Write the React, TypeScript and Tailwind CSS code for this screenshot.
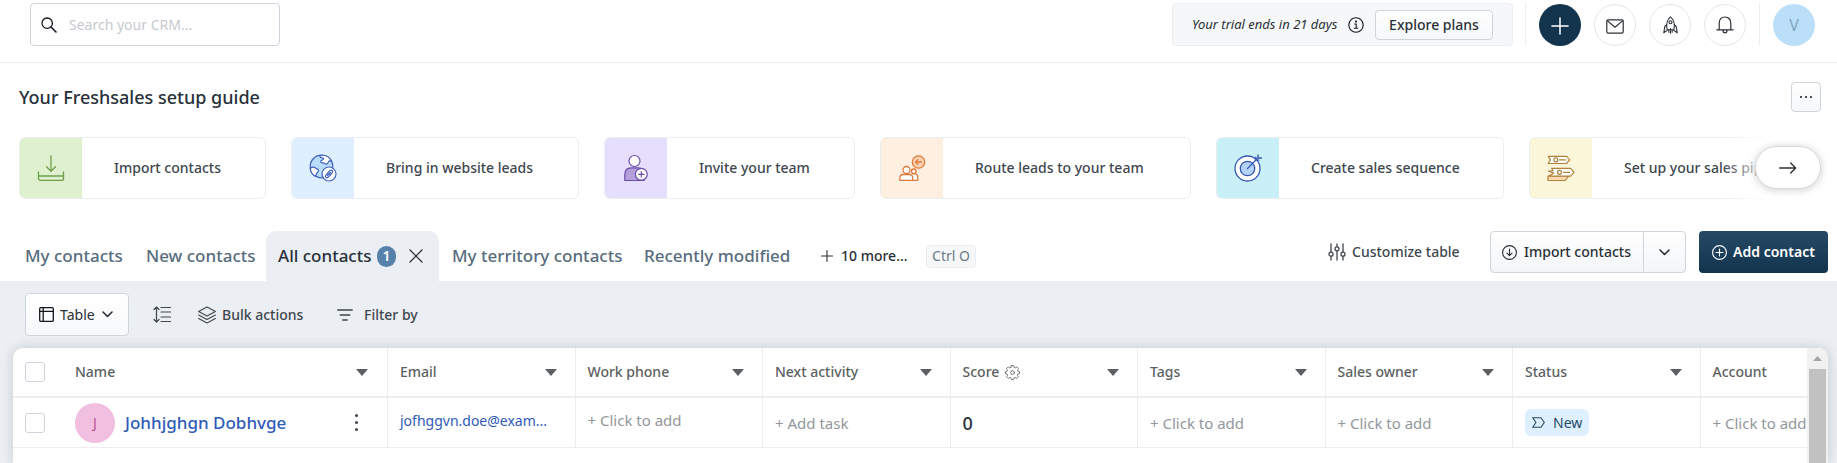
import React from "react";

type IconProps = { className?: string };

const stroke = {
  fill: "none",
  stroke: "currentColor",
  strokeLinecap: "round" as const,
  strokeLinejoin: "round" as const,
};

function SearchIcon() {
  return (
    <svg className="size-4 shrink-0 text-[#12161a]" viewBox="0 0 16 16" {...stroke} strokeWidth="1.3">
      <circle cx="6.2" cy="6.2" r="5.2" />
      <path d="M10 10l5 5" strokeWidth="1.6" />
    </svg>
  );
}

function InfoIcon() {
  return (
    <svg className="size-4 shrink-0 text-[#12161a]" viewBox="0 0 16 16" {...stroke} strokeWidth="1.1">
      <circle cx="8" cy="8" r="7.2" />
      <path d="M6.6 7h1.6v4.2M6.4 11.3h3.4" />
      <circle cx="8" cy="4.6" r="0.5" fill="currentColor" />
    </svg>
  );
}

function MailIcon() {
  return (
    <svg className="mt-1 h-[15px] w-[18px]" viewBox="0 0 18 15" {...stroke} strokeWidth="1.2">
      <rect x="0.8" y="0.8" width="16.4" height="13.400" rx="1.4" />
      <path d="M1.2 1.600l7.8 6.600 7.8-6.600" />
    </svg>
  );
}

function RocketIcon() {
  return (
    <svg className="h-[18px] w-[15px]" viewBox="0 0 15 18" {...stroke} strokeWidth="1.1">
      <path d="M4.200 13.800C3 8.800 3.800 4 7.500.8c3.700 3.200 4.500 8 3.300 13z" />
      <circle cx="7.500" cy="6.200" r="1.500" />
      <path d="M3.700 8.600L1.800 10.500.8 16.800l3.400-2.400M11.300 8.600l1.900 1.900 1 6.300-3.400-2.400M7.500 12.500v4.700M5.800 14.200v2M9.200 14.200v2" />
    </svg>
  );
}

function BellIcon() {
  return (
    <svg className="h-[18px] w-[18px]" viewBox="0 0 18 18" {...stroke} strokeWidth="1.2">
      <path d="M.8 13.800h16.400M3.200 13.600V7.400C3.200 3.600 5.400 1 9 1s5.800 2.600 5.800 6.400v6.200" />
      <path d="M7 14.200c0 1.500.8 2.600 2 2.600s2-1.100 2-2.600" />
    </svg>
  );
}

function DownloadTray() {
  return (
    <svg className="size-7 text-[#6f9e4c]" viewBox="0 0 28 28" {...stroke} strokeWidth="1.300">
      <path d="M14 2v15M9.500 12.800l4.500 4.400 4.500-4.400" />
      <path d="M1.500 18v6.200a2.200 2.200 0 002.200 2.200h20.600a2.200 2.200 0 002.200-2.200V18M1.500 22h25" />
    </svg>
  );
}

function GlobeLink() {
  return (
    <svg className="size-7 text-[#3f60c0]" viewBox="0 0 28 28" {...stroke} strokeWidth="1.200">
      <circle cx="12.500" cy="12.500" r="11.300" fill="#b9dcfb" />
      <path d="M12 1.300c-1.800 1.300-1 2.500 1 2.600 2.500.2 1.500 1.900 0 2.300-2 .6-1.700 2.500.6 2.600 2.200.1 2.400 1.500 3.900 1.300 1.800-.3 1.500-2.200 2.500-3 1-.6 2 0 2.500 0C20.800 3.500 17 1 12 1.300z" fill="#fff" />
      <path d="M1.300 14.500c1.700-1.500 3.400-1.700 5.200-.5 1.800 1.300 3.600 1 2.900 3.200-.5 1.500-2 1.200-2 2.800 0 1.200-1 1.800-1.800 2C3 20 1.500 17.500 1.300 14.500z" fill="#fff" />
      <circle cx="20" cy="20" r="7" fill="#fff" />
      <path d="M18.200 19.400l2.700-2.700c1.700-1.400 3.600.5 2.200 2.200l-2.400 2.400M21.800 20.600l-2.700 2.700c-1.700 1.400-3.600-.5-2.200-2.200l2.400-2.400M18.500 21.500l3-3" />
    </svg>
  );
}

function PersonPlus() {
  return (
    <svg className="h-7 w-6 text-[#6a4cab]" viewBox="0 0 24 28" {...stroke} strokeWidth="1.200">
      <circle cx="10.500" cy="7" r="5.500" fill="#fff" />
      <path d="M.8 26.500V20.500c0-4.500 2.500-6.700 6.500-6.700H14c3.500 0 6 2.200 6 6v6.700z" fill="#b6a0dc" />
      <circle cx="17.300" cy="20.300" r="5.900" fill="#fff" />
      <path d="M17.300 17.500v5.600M14.500 20.300h5.600" />
    </svg>
  );
}

function RouteLeads() {
  return (
    <svg className="size-7 text-[#e07a3c]" viewBox="0 0 28 28" {...stroke} strokeWidth="1.300">
      <circle cx="20.500" cy="8" r="6.200" fill="#fbd3b0" />
      <path d="M23.500 8h-6M19.900 5.600L17.500 8l2.400 2.400" />
      <path d="M15 26.300h4.800v-2.500c0-2.500-1.200-4-3.300-4h-1.500" fill="#fff" />
      <circle cx="15.800" cy="17.300" r="2.300" fill="#fff" />
      <circle cx="8.500" cy="16" r="3.500" fill="#fff" />
      <path d="M1.800 26.300v-2.200c0-2.400 1.500-3.600 3.700-3.600h5.600c2.200 0 3.700 1.200 3.700 3.600v2.200z" fill="#fff" />
    </svg>
  );
}

function TargetIcon() {
  return (
    <svg className="size-7 text-[#3757b5]" viewBox="0 0 28 28" {...stroke} strokeWidth="1.300">
      <circle cx="13.500" cy="14.500" r="12.500" fill="#fff" />
      <circle cx="13.500" cy="14.500" r="7.200" fill="#b5d3f8" />
      <path d="M13.500 14.500L24.500 3.500M24 .8v3.200h3.500M21.800 3.200v3h3" />
    </svg>
  );
}

function Signposts() {
  return (
    <svg className="size-7 text-[#b08240]" viewBox="0 0 28 28" {...stroke} strokeWidth="1.200">
      <path d="M1.200 2.300h18.300l3.200 3.600-3.200 3.600H1.200l2.300-3.600z" fill="#fff" />
      <circle cx="8.800" cy="5.900" r="2" />
      <path d="M12.500 5.900h6" />
      <path d="M1 22h20.800l-3.600 4.500H1z" fill="#fbdcb2" />
      <path d="M4.600 14.300h19l3.400 4-3.400 3.800H1.800l5-2.800L1.500 17h4.600z" fill="#fff" />
      <circle cx="12.500" cy="18.300" r="2" />
      <path d="M16.500 18.300h6" />
    </svg>
  );
}

function Caret() {
  return (
    <svg className="h-[7px] w-3 shrink-0 text-[#5c5f62]" viewBox="0 0 12 7" aria-hidden="true">
      <path d="M0 0h12L6 7z" fill="currentColor" />
    </svg>
  );
}

function Chevron({ className = "" }: IconProps) {
  return (
    <svg className={`h-[7px] w-[11px] shrink-0 ${className}`} viewBox="0 0 11 7" {...stroke} strokeWidth="1.600">
      <path d="M1 1l4.500 4.500L10 1" />
    </svg>
  );
}

function GearIcon() {
  return (
    <svg className="size-[15px]" viewBox="0 0 16 16" {...stroke} strokeWidth="0.9">
      <circle cx="8" cy="8" r="2" />
      <path d="M6.700.7h2.600l.4 1.900 1.200.5 1.700-1.100 1.800 1.800-1.100 1.700.5 1.200 1.600.3v2.300l-1.700.4-.5 1.200 1.100 1.700-1.800 1.800-1.700-1.100-1.200.5-.4 1.600H6.700l-.4-1.700-1.200-.5-1.700 1.100-1.800-1.800 1.100-1.700-.5-1.200L.5 9.300V7l1.700-.3.5-1.200-1.100-1.700 1.800-1.800 1.700 1.100 1.200-.5z" />
    </svg>
  );
}

const cards = [
  { label: "Import contacts", width: "w-[247px]", tint: "bg-[#dff0cf]", icon: <DownloadTray /> },
  { label: "Bring in website leads", width: "w-[288px]", tint: "bg-[#def0ff]", icon: <GlobeLink /> },
  { label: "Invite your team", width: "w-[251px]", tint: "bg-[#e5dffd]", icon: <PersonPlus /> },
  { label: "Route leads to your team", width: "w-[311px]", tint: "bg-[#feefe0]", icon: <RouteLeads /> },
  { label: "Create sales sequence", width: "w-[288px]", tint: "bg-[#caf0f7]", icon: <TargetIcon /> },
  { label: "Set up your sales pipeline", width: "w-[311px]", tint: "bg-[#fbf6da]", icon: <Signposts /> },
];

function TopBar() {
  const circle = "flex size-[42px] items-center justify-center rounded-full border border-[#e3e6ea] bg-white text-[#2b3036]";
  return (
    <header className="flex h-[63px] items-start justify-between border-b border-[#ebedf0] pt-[3px] pr-[22px] pl-[30px]">
      <label className="flex h-[43px] w-[250px] items-center gap-3 rounded border border-[#cfd5dc] pr-2 pl-[10px]">
        <SearchIcon />
        <input
          type="search"
          aria-label="Search your CRM"
          placeholder="Search your CRM..."
          className="min-w-0 flex-1 text-sm outline-none placeholder:text-[#c6cad0]"
        />
      </label>
      <div className="flex items-center">
        <div className="flex h-[43px] w-[341px] items-center rounded border border-[#ebeef1] bg-[#f5f7f9] pl-[19px]">
          <span className="w-[156px] text-[13px] whitespace-nowrap text-[#2b3036] italic">Your trial ends in 21 days</span>
          <InfoIcon />
          <button className="ml-[11px] h-[30px] w-[118px] rounded border border-[#cfd5dc] bg-linear-to-b from-white to-[#f5f7f9] text-sm font-medium text-[#2b3036]">
            Explore plans
          </button>
        </div>
        <div className="mr-[13px] ml-3 h-[42px] w-px bg-[#ebedf0]" />
        <div className="flex gap-[13px]">
          <button aria-label="Quick add" className="flex size-[42px] items-center justify-center rounded-full bg-[#12344d] text-white">
            <svg className="mt-[2px] size-[18px]" viewBox="0 0 18 18" {...stroke} strokeWidth="1.500">
              <path d="M9 .9v16.200M.9 9h16.200" />
            </svg>
          </button>
          <button aria-label="Email" className={circle}><MailIcon /></button>
          <button aria-label="What's new" className={circle}><RocketIcon /></button>
          <button aria-label="Notifications" className={circle}><BellIcon /></button>
        </div>
        <div className="mx-[13px] h-[42px] w-px bg-[#ebedf0]" />
        <button aria-label="Profile" className="size-[42px] rounded-full bg-[#bbdff8] text-base text-[#7fa6c4]">V</button>
      </div>
    </header>
  );
}

function SetupGuide() {
  return (
    <section className="pt-[19px]">
      <div className="flex items-center justify-between pr-4 pl-[19px]">
        <h1 className="text-lg font-medium text-[#283039]">Your Freshsales setup guide</h1>
        <button aria-label="More options" className="flex h-[30px] w-[30px] items-center justify-center gap-[3px] rounded border border-[#cfd5dc] bg-linear-to-b from-white to-[#f5f7f9]">
          <span className="size-[2px] rounded-full bg-[#12161a]" />
          <span className="size-[2px] rounded-full bg-[#12161a]" />
          <span className="size-[2px] rounded-full bg-[#12161a]" />
        </button>
      </div>
      <div className="relative mt-[25px] mr-4 ml-[19px]">
        <div className="flex gap-[25px] overflow-hidden">
          {cards.map((card) => (
            <a
              key={card.label}
              href="#setup"
              className={`flex h-[62px] shrink-0 overflow-hidden rounded-md border border-[#ebedf0] ${card.width}`}
            >
              <span className={`flex w-[62px] shrink-0 items-center justify-center ${card.tint}`}>{card.icon}</span>
              <span className="flex items-center pl-8 text-sm font-medium whitespace-nowrap text-[#40474f]">{card.label}</span>
            </a>
          ))}
        </div>
        <div className="pointer-events-none absolute inset-y-0 right-0 w-[100px] bg-linear-to-r from-transparent to-white to-50%" />
        <button
          aria-label="Next"
          className="absolute top-[9px] right-0 flex h-[43px] w-[66px] items-center justify-center rounded-full border border-[#d5dae0] bg-white text-[#2b3036] shadow-[0_1px_8px_rgba(0,0,0,0.2)]"
        >
          <svg className="h-3 w-[18px]" viewBox="0 0 18 12" {...stroke} strokeWidth="1.300">
            <path d="M.7 6h16M11.700 1l5 5-5 5" />
          </svg>
        </button>
      </div>
    </section>
  );
}

function Tabs() {
  const tab = "whitespace-nowrap text-[17px] font-medium text-[#576c7d]";
  return (
    <nav className="flex h-[50px] items-start pr-[9px] pl-[25px]" aria-label="Views">
      <div className="flex h-[50px] items-center">
        <a href="#my" className={`w-[121px] ${tab}`}>My contacts</a>
        <a href="#new" className={`w-[120px] ${tab}`}>New contacts</a>
        <div className="flex h-[50px] w-[173px] items-center rounded-t-[10px] bg-[#ebeef2] pl-3">
          <a href="#all" className="w-[99px] text-[17px] font-medium whitespace-nowrap text-[#283039]">All contacts</a>
          <span className="flex h-[21px] w-[19px] items-center justify-center rounded-full bg-[#5581ab] text-sm font-semibold text-white">1</span>
          <button aria-label="Close tab" className="ml-[13px]">
            <svg className="size-[14px] text-[#2b3036]" viewBox="0 0 14 14" {...stroke} strokeWidth="1.200">
              <path d="M1 1l12 12M13 1L1 13" />
            </svg>
          </button>
        </div>
        <a href="#territory" className={`ml-[13px] w-48 ${tab}`}>My territory contacts</a>
        <a href="#recent" className={`w-[177px] ${tab}`}>Recently modified</a>
        <button className="flex items-center gap-2 text-sm font-medium text-[#2b3036]">
          <svg className="size-3" viewBox="0 0 12 12" {...stroke} strokeWidth="1.100">
            <path d="M6 .5v11M.5 6h11" />
          </svg>
          <span className="w-[85px] text-left">10 more...</span>
        </button>
        <kbd className="flex h-[23px] w-[50px] items-center justify-center rounded border border-[#ebeef1] bg-[#f5f7f9] font-[inherit] text-sm text-[#6f7c87]">
          Ctrl O
        </kbd>
      </div>
      <div className="ml-auto flex items-center">
        <button className="flex w-[162px] items-center gap-[6px] text-sm font-medium whitespace-nowrap text-[#40474f]">
          <svg className="size-[18px]" viewBox="0 0 18 18" {...stroke} strokeWidth="1.300">
            <path d="M3 1v8M3 13.500V17M9 1v2.500M9 8v9M15 1v8M15 13.500V17" />
            <circle cx="3" cy="11.200" r="2" />
            <circle cx="9" cy="5.800" r="2" />
            <circle cx="15" cy="11.200" r="2" />
          </svg>
          Customize table
        </button>
        <div className="flex h-[42px] w-[196px] rounded border border-[#cfd5dc] bg-linear-to-b from-white to-[#f3f5f8] text-[#2b3036]">
          <button className="flex w-[153px] items-center gap-[7px] border-r border-[#cfd5dc] pl-[11px] text-sm font-medium whitespace-nowrap">
            <svg className="size-[15px]" viewBox="0 0 15 15" {...stroke} strokeWidth="1.100">
              <circle cx="7.500" cy="7.500" r="6.900" />
              <path d="M7.500 4v6.500M5 8.200l2.500 2.500L10 8.200" />
            </svg>
            Import contacts
          </button>
          <button aria-label="More import options" className="flex flex-1 items-center justify-center">
            <Chevron />
          </button>
        </div>
        <button className="ml-[13px] flex h-[42px] w-[129px] items-center justify-center gap-[6px] rounded bg-linear-to-b from-[#264966] to-[#12344d] text-sm font-semibold whitespace-nowrap text-white">
          <svg className="size-[15px]" viewBox="0 0 15 15" {...stroke} strokeWidth="1.100">
            <circle cx="7.500" cy="7.500" r="6.900" />
            <path d="M7.500 4v7M4 7.500h7" />
          </svg>
          Add contact
        </button>
      </div>
    </nav>
  );
}

function Toolbar() {
  return (
    <div className="flex h-[67px] items-center pl-[25px] text-sm font-medium text-[#40474f]">
      <button className="flex h-[43px] w-[104px] items-center rounded border border-[#cfd5dc] bg-linear-to-b from-white to-[#f7f8fa] pl-[13px] font-normal text-[#2b3036]">
        <svg className="size-[15px] shrink-0 text-[#12161a]" viewBox="0 0 15 15" {...stroke} strokeWidth="1.300">
          <rect x=".7" y=".7" width="13.600" height="13.600" rx="1" />
          <path d="M4.200.7v13.600M.7 4.400h13.600" />
        </svg>
        <span className="w-12 pl-[6px] text-left">Table</span>
        <Chevron />
      </button>
      <button aria-label="Row height" className="ml-6">
        <svg className="h-[17px] w-[18px]" viewBox="0 0 18 17" {...stroke} strokeWidth="1.200">
          <path d="M3.500 1v15M1 3.500L3.500 1 6 3.500M1 13.500L3.500 16 6 13.500M8 1.500h9.500M8 6h9.500M8 11h9.500M8 15.500h9.500" />
        </svg>
      </button>
      <button className="ml-[27px] flex w-[139px] items-center gap-[6px] whitespace-nowrap">
        <svg className="size-[18px]" viewBox="0 0 18 18" {...stroke} strokeWidth="1.100">
          <path d="M9 1l8.400 4.500L9 10 .6 5.500zM.6 9L9 13.500 17.400 9M.6 12.500L9 17l8.400-4.500" />
        </svg>
        Bulk actions
      </button>
      <button className="flex items-center gap-[11px] whitespace-nowrap">
        <svg className="h-3 w-4" viewBox="0 0 16 12" {...stroke} strokeWidth="1.300">
          <path d="M.7 1h14.600M3.200 6h9.600M5.700 11h4.600" />
        </svg>
        Filter by
      </button>
    </div>
  );
}

const columns = ["Email", "Work phone", "Next activity", "Score", "Tags", "Sales owner", "Status", "Account"];

function Check({ label }: { label: string }) {
  return (
    <input
      type="checkbox"
      aria-label={label}
      className="mr-[30px] size-5 shrink-0 appearance-none rounded-[3px] border border-[#cfd5dc] bg-white"
    />
  );
}

function AddLink({ text }: { text: string }) {
  return <button className="text-[15px] whitespace-nowrap text-[#92979c]">{text}</button>;
}

function ContactsTable() {
  const cell = "border-r border-b border-[#ebedf0] px-3 align-middle";
  return (
    <div className="mr-[9px] ml-[13px] flex min-h-[115px] overflow-hidden rounded-t-[10px] bg-white shadow-[0_0_12px_rgba(24,50,71,0.18)]">
      <div className="min-w-0 flex-1 overflow-hidden">
        <table className="w-[1875px] table-fixed border-separate border-spacing-0 text-left">
          <colgroup>
            <col className="w-[375px]" />
            {columns.map((name) => (
              <col key={name} />
            ))}
          </colgroup>
          <thead>
            <tr className="h-[50px] text-sm text-[#5c5f62]">
              <th className="border-r border-b-2 border-[#ebedf0] pr-[19px] pl-3 font-medium">
                <div className="flex items-center">
                  <Check label="Select all" />
                  Name
                  <span className="ml-auto"><Caret /></span>
                </div>
              </th>
              {columns.map((name) => (
                <th key={name} className="border-r border-b-2 border-[#ebedf0] pr-[18px] pl-3 font-medium">
                  <div className="flex items-center gap-[6px]">
                    {name}
                    {name === "Score" && <GearIcon />}
                    <span className="ml-auto"><Caret /></span>
                  </div>
                </th>
              ))}
            </tr>
          </thead>
          <tbody>
            <tr className="h-[50px]">
              <td className="border-r border-b border-[#ebedf0] pr-[29px] pl-3">
                <div className="flex items-center">
                  <Check label="Select Johhjghgn Dobhvge" />
                  <span className="mr-[10px] flex size-10 items-center justify-center rounded-full bg-[#f1bfe0] text-sm text-[#b8558f]">J</span>
                  <a href="#contact" className="text-[17px] font-medium whitespace-nowrap text-[#2f5bb8]">Johhjghgn Dobhvge</a>
                  <button aria-label="Row actions" className="ml-auto flex flex-col gap-[4px]">
                    <span className="size-[3px] rounded-full bg-[#40474f]" />
                    <span className="size-[3px] rounded-full bg-[#40474f]" />
                    <span className="size-[3px] rounded-full bg-[#40474f]" />
                  </button>
                </div>
              </td>
              <td className={`${cell} pb-[6px]`}>
                <a href="#email" className="text-sm whitespace-nowrap text-[#2f5bb8]">jofhggvn.doe@exam...</a>
              </td>
              <td className={`${cell} pb-[6px]`}><AddLink text="+ Click to add" /></td>
              <td className={cell}><AddLink text="+ Add task" /></td>
              <td className={`${cell} text-lg font-medium text-[#283039]`}>0</td>
              <td className={cell}><AddLink text="+ Click to add" /></td>
              <td className={cell}><AddLink text="+ Click to add" /></td>
              <td className={cell}>
                <span className="inline-flex h-[27px] items-center gap-2 rounded-md bg-[#def0ff] px-[7px] align-middle text-sm text-[#264966]">
                  <svg className="h-[11px] w-[13px]" viewBox="0 0 13 11" {...stroke} strokeWidth="1.100">
                    <path d="M.7.700h8.300l3.300 4.800L9 10.300H.7l3.300-4.800z" />
                  </svg>
                  New
                </span>
              </td>
              <td className={cell}><AddLink text="+ Click to add" /></td>
            </tr>
          </tbody>
        </table>
      </div>
      <div className="flex w-[21px] shrink-0 flex-col items-center bg-[#f1f1f1]" aria-hidden="true">
        <div className="flex h-[21px] items-center">
          <svg className="h-[5px] w-[9px] text-[#a3a3a3]" viewBox="0 0 9 5">
            <path d="M0 5h9L4.500 0z" fill="currentColor" />
          </svg>
        </div>
        <div className="w-[17px] flex-1 bg-[#c1c1c1]" />
      </div>
    </div>
  );
}

export default function App() {
  return (
    <div className="min-h-screen overflow-hidden bg-white font-['Noto_Sans','Open_Sans',sans-serif]">
      <TopBar />
      <SetupGuide />
      <div className="h-8" />
      <Tabs />
      <main className="bg-[#ebeef2]">
        <Toolbar />
        <ContactsTable />
      </main>
    </div>
  );
}
